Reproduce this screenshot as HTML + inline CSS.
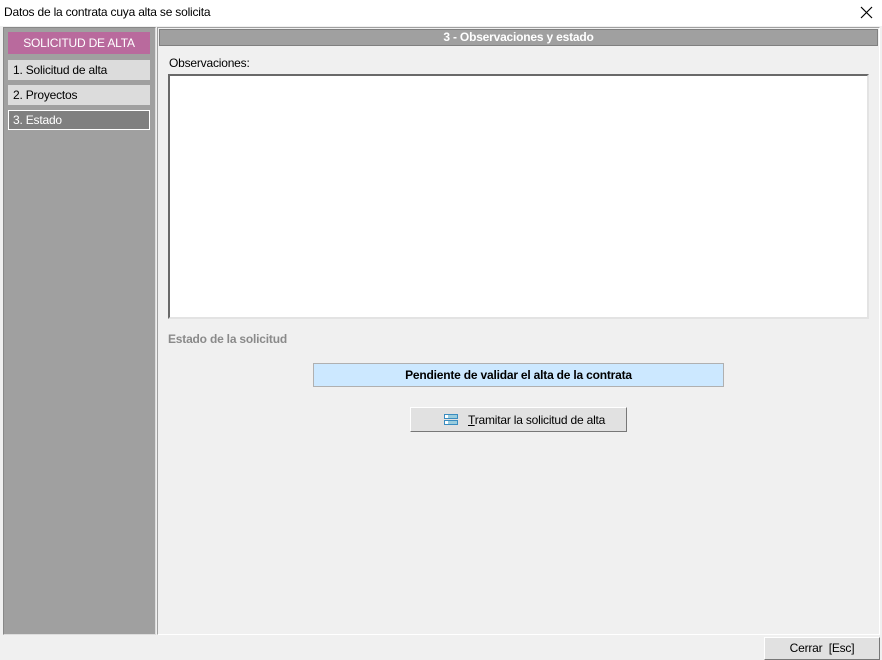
<!DOCTYPE html>
<html><head><style>
body{margin:0;width:882px;height:660px;background:#f0f0f0;font-family:"Liberation Sans",sans-serif;font-size:12px;letter-spacing:-0.2px;position:relative;overflow:hidden}
div{position:absolute;box-sizing:border-box}
</style></head><body>
<div style="left:0;top:0;width:882px;height:26px;background:#fff"></div>
<div style="left:4px;top:5px;font-size:12px;color:#000">Datos de la contrata cuya alta se solicita</div>
<svg style="position:absolute;left:860px;top:6px" width="13" height="13"><path d="M1 1L12 12M12 1L1 12" stroke="#000" stroke-width="1.2"/></svg>
<div style="left:3px;top:27px;width:153px;height:608px;background:#a0a0a0;border:1px solid #888;border-right-color:#ddd;border-bottom-color:#ddd"></div>
<div style="left:8px;top:32px;width:142px;height:22px;background:#b96a9d;color:#fff;text-align:center;line-height:23px;font-size:12px">SOLICITUD DE ALTA</div>
<div style="left:8px;top:60px;width:142px;height:20px;background:#dcdcdc;padding-left:5px;line-height:20px">1. Solicitud de alta</div>
<div style="left:8px;top:85px;width:142px;height:20px;background:#dcdcdc;padding-left:5px;line-height:20px">2. Proyectos</div>
<div style="left:8px;top:110px;width:142px;height:20px;background:#808080;border:1px solid #fff;padding-left:4px;line-height:18px;color:#fff">3. Estado</div>
<div style="left:157px;top:27px;width:723px;height:608px;border:1px solid #a0a0a0;border-right-color:#fff;border-bottom-color:#fff;background:#f0f0f0"></div>
<div style="left:159px;top:29px;width:719px;height:17px;background:#a0a0a0;border:1px solid #808080;color:#fff;font-weight:bold;text-align:center;line-height:15px">3 - Observaciones y estado</div>
<div style="left:169px;top:56px">Observaciones:</div>
<div style="left:168px;top:74px;width:701px;height:245px;background:#fff;border:2px solid #a0a0a0;border-top-color:#696969;border-left-color:#696969;border-right-color:#e3e3e3;border-bottom-color:#e3e3e3"></div>
<div style="left:168px;top:332px;font-weight:bold;color:#8a8a8a;font-size:12px">Estado de la solicitud</div>
<div style="left:313px;top:363px;width:411px;height:24px;background:#cce8ff;border:1px solid #b0b0b0;text-align:center;line-height:22px;font-weight:bold;font-size:12px">Pendiente de validar el alta de la contrata</div>
<div style="left:410px;top:407px;width:217px;height:25px;background:#e1e1e1;border:1px solid #adadad;border-right-color:#777;border-bottom-color:#777;border-top-color:#fff;border-left-color:#fff"></div>
<svg style="position:absolute;left:444px;top:414px" width="14" height="11"><rect x="0.5" y="0.5" width="13" height="4" fill="#9cd" stroke="#3a8cc0"/><rect x="0.5" y="6.5" width="13" height="4" fill="#9cd" stroke="#3a8cc0"/><rect x="1" y="1" width="3" height="3" fill="#fff"/><rect x="1" y="7" width="3" height="3" fill="#fff"/></svg>
<div style="left:468px;top:413px"><u>T</u>ramitar la solicitud de alta</div>
<div style="left:764px;top:637px;width:116px;height:23px;background:#e1e1e1;border:1px solid #fff;border-right-color:#777;border-bottom-color:#777;text-align:center;line-height:21px">Cerrar &nbsp;[Esc]</div>
</body></html>
